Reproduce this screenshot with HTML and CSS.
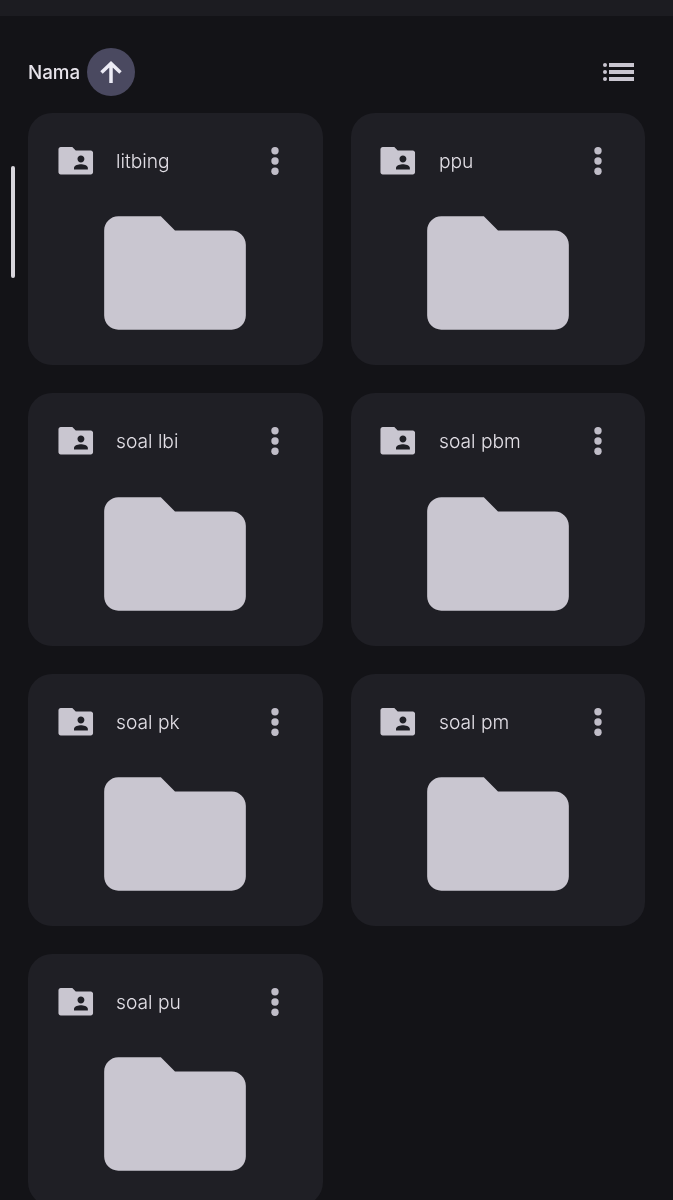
FILE: index.html
```html
<!DOCTYPE html>
<html lang="id">
<head>
<meta charset="utf-8">
<title>Drive</title>
<link rel="stylesheet" href="styles.css">
</head>
<body>
<svg class="defs" width="0" height="0" aria-hidden="true">
  <symbol id="shared" viewBox="0 0 24 24"><path d="M20.7 6H12L10 4H3.3C2.6 4 2 4.6 2 5.3v13.4C2 19.4 2.6 20 3.3 20h17.4c.7 0 1.3-.6 1.3-1.3V7.3C22 6.6 21.400 6 20.700 6zM15 9c1.100 0 2 .9 2 2s-.9 2-2 2-2-.9-2-2 .9-2 2-2zm4 8h-8v-1c0-1.330 2.670-2 4-2s4 .67 4 2v1z"/></symbol>
  <symbol id="folder" viewBox="0 0 24 24"><path d="M10 4H4c-1.100 0-2 .9-2 2v12c0 1.100.9 2 2 2h16c1.100 0 2-.9 2-2V8c0-1.100-.9-2-2-2h-8l-2-2z"/></symbol>
  <symbol id="dots" viewBox="0 0 12 32"><circle cx="6" cy="5.800" r="3.700"/><circle cx="6" cy="16" r="3.700"/><circle cx="6" cy="26.200" r="3.700"/></symbol>
</svg>
<div class="topbar"></div>
<div class="scrollbar"></div>
<header class="sort-row">
  <div class="sort">
    <span class="sort-label">Nama</span>
    <span class="sort-btn">
      <svg class="arrow" viewBox="0 0 24 24"><path d="M12 23V4.500M2.500 12.500 12 3.500l9.500 9"/></svg>
    </span>
  </div>
  <svg class="list-icon" viewBox="0 0 31 20">
    <circle cx="2" cy="3" r="2"/><circle cx="2" cy="10" r="2"/><circle cx="2" cy="17" r="2"/>
    <rect x="6" y="1" width="25" height="4"/><rect x="6" y="8" width="25" height="4"/><rect x="6" y="15" width="25" height="4"/>
  </svg>
</header>
<main class="grid">
  <article class="card"><div class="card-head"><svg class="kind"><use href="#shared"/></svg><span class="name">litbing</span><svg class="more"><use href="#dots"/></svg></div><svg class="thumb"><use href="#folder"/></svg></article>
  <article class="card"><div class="card-head"><svg class="kind"><use href="#shared"/></svg><span class="name">ppu</span><svg class="more"><use href="#dots"/></svg></div><svg class="thumb"><use href="#folder"/></svg></article>
  <article class="card"><div class="card-head"><svg class="kind"><use href="#shared"/></svg><span class="name">soal lbi</span><svg class="more"><use href="#dots"/></svg></div><svg class="thumb"><use href="#folder"/></svg></article>
  <article class="card"><div class="card-head"><svg class="kind"><use href="#shared"/></svg><span class="name">soal pbm</span><svg class="more"><use href="#dots"/></svg></div><svg class="thumb"><use href="#folder"/></svg></article>
  <article class="card"><div class="card-head"><svg class="kind"><use href="#shared"/></svg><span class="name">soal pk</span><svg class="more"><use href="#dots"/></svg></div><svg class="thumb"><use href="#folder"/></svg></article>
  <article class="card"><div class="card-head"><svg class="kind"><use href="#shared"/></svg><span class="name">soal pm</span><svg class="more"><use href="#dots"/></svg></div><svg class="thumb"><use href="#folder"/></svg></article>
  <article class="card"><div class="card-head"><svg class="kind"><use href="#shared"/></svg><span class="name">soal pu</span><svg class="more"><use href="#dots"/></svg></div><svg class="thumb"><use href="#folder"/></svg></article>
</main>
</body>
</html>
```
FILE: styles.css
```css
* { box-sizing: border-box; }
html, body { margin: 0; height: 1200px; overflow: hidden; background: #131317; }
body { position: relative; font-family: Inter, Roboto, sans-serif; color: #e6e3ea; }
.defs { position: absolute; }
.topbar { height: 16px; background: #1c1c21; }
.scrollbar { position: absolute; left: 11px; top: 166px; width: 4px; height: 112px; border-radius: 2px; background: #d8d6dc; }
.sort-row { display: flex; align-items: center; justify-content: space-between; padding: 32px 39px 17px 28px; }
.sort { display: flex; align-items: center; }
.sort-label { width: 59px; font-size: 18.800px; font-weight: 500; will-change: transform; }
.sort-btn { display: flex; align-items: center; justify-content: center; width: 48px; height: 48px; border-radius: 50%; background: #4a4960; }
.arrow { width: 24px; height: 24px; fill: none; stroke: #ecebf5; stroke-width: 3.500; }
.list-icon { width: 31px; height: 20px; fill: #c9c6d0; }
.grid { display: grid; grid-template-columns: 1fr 1fr; gap: 28px; padding: 0 28px; }
.card { height: 252.330px; padding: 27px 0 7px; border-radius: 24px; background: #1f1f25; display: flex; flex-direction: column; align-items: center; }
.card-head { align-self: stretch; display: flex; align-items: center; height: 42px; padding-left: 26.500px; }
.kind { width: 41.500px; height: 41.500px; flex: none; fill: #c9c6d0; }
.name { margin-left: 20px; flex: 1; font-size: 19.200px; font-weight: 300; color: #e2dfe6; will-change: transform; }
.more { width: 12px; height: 32px; flex: none; margin-right: 41.500px; fill: #c0bdc8; }
.thumb { width: 170px; height: 170px; margin-top: 6.500px; fill: #c9c6d0; flex: none; }
```
